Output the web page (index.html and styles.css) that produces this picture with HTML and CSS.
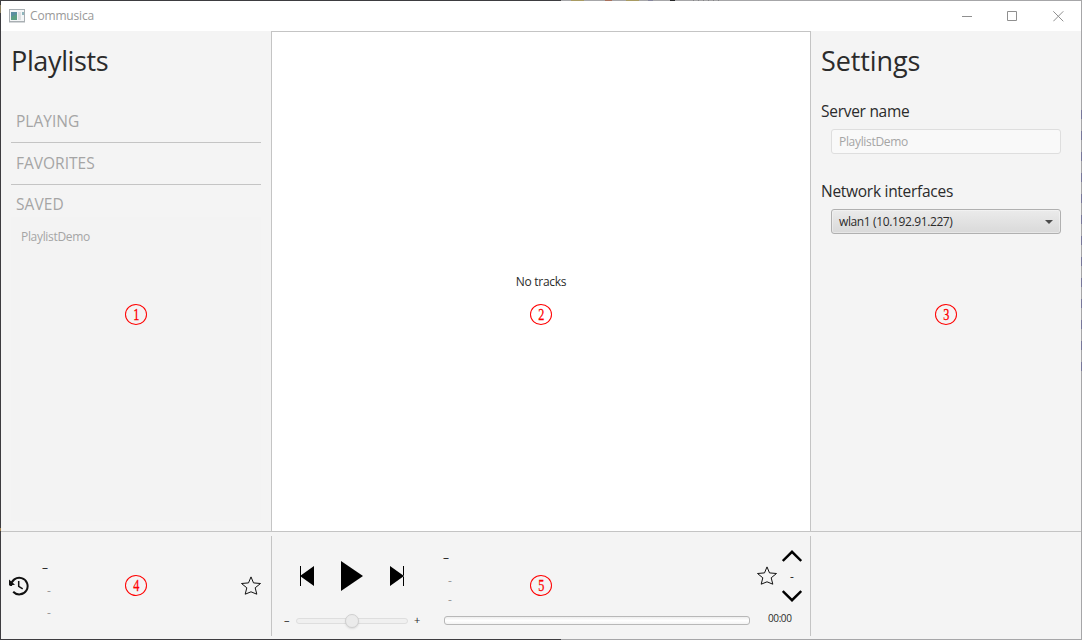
FILE: index.html
```html
<!DOCTYPE html>
<html lang="en">
<head>
<meta charset="utf-8">
<title>Commusica</title>
<link rel="stylesheet" href="styles.css">
</head>
<body>
<div class="window">
  <header class="titlebar">
    <svg class="app-icon" width="16" height="14" viewBox="0 0 16 14">
      <rect x=".5" y=".5" width="15" height="12" fill="#f4f6f7" stroke="#a9afb3"/>
      <rect x="2" y="3" width="6" height="8" fill="#5b8fa0"/>
      <path d="M2 11V8l6-3v6z" fill="#5c9f83"/>
      <rect x="9" y="3" width="3" height="8" fill="#dde0e2"/>
      <rect x="13" y="3" width="2" height="3" fill="#8fb6bd"/>
      <path d="M0 13.500h16" stroke="#d5d8da"/>
    </svg>
    <span class="app-name">Commusica</span>
    <div class="window-buttons">
      <svg class="minimize" width="10" height="11" viewBox="0 0 10 11"><path d="M0 5.500h10"/></svg>
      <svg width="11" height="11" viewBox="0 0 11 11"><path d="M.5.5h9v9h-9z"/></svg>
      <svg width="11" height="11" viewBox="0 0 11 11"><path d="M.3.300l10 10M10.300.300l-10 10"/></svg>
    </div>
  </header>

  <div class="columns">
    <aside class="playlists">
      <h1 class="heading"><span class="t-playlists">Playlists</span></h1>
      <div class="section playing">PLAYING</div>
      <div class="section favorites">FAVORITES</div>
      <div class="section saved">SAVED</div>
      <div class="saved-list"><div class="saved-item">PlaylistDemo</div></div>
    </aside>
    <main class="tracks">No tracks</main>
    <aside class="settings">
      <h1 class="heading"><span class="t-settings">Settings</span></h1>
      <div class="label server-label">Server name</div>
      <div class="field">PlaylistDemo</div>
      <div class="label network-label">Network interfaces</div>
      <div class="combo"><span>wlan1 (10.192.91.227)</span><i class="arrow"></i></div>
    </aside>
  </div>

  <footer class="bottom">
    <section class="history">
      <svg class="history-icon" width="21" height="20" viewBox="0 0 21 20">
        <path d="M2 10a8.300 8.300 0 1 1 2.200 5.700" fill="none" stroke="#111" stroke-width="2"/>
        <path d="M0 3.500l6 5.200-6 .8z" fill="#111"/>
        <path d="M9.700 5v5.400l4 2.500" fill="none" stroke="#111" stroke-width="1.500"/>
      </svg>
      <div class="meta">
        <span class="dash title">–</span>
        <span class="dash sub">-</span>
        <span class="dash sub last">-</span>
      </div>
      <svg class="star" width="20" height="19" viewBox="0 0 20 19"><path d="M10 .9l2.500 6 7 .6-5.300 4.300 1.600 6.400L10 15.800l-5.800 2.400 1.600-6.400L.5 7.500l7-.6z"/></svg>
    </section>

    <section class="player">
      <div class="controls">
        <div class="transport">
          <svg width="14" height="20" viewBox="0 0 14 20"><path d="M0 0h1v20H0zM14 0v20L0 10z"/></svg>
          <svg width="22" height="30" viewBox="0 0 22 30"><path d="M0 0l22 15L0 30z"/></svg>
          <svg width="14" height="20" viewBox="0 0 14 20"><path d="M13 0h1v20h-1zM0 0v20l14-10z"/></svg>
        </div>
        <div class="volume">
          <span class="sign">–</span>
          <div class="slider"><i class="thumb"></i></div>
          <span class="sign">+</span>
        </div>
      </div>
      <div class="info">
        <div class="meta">
          <span class="dash title">–</span>
          <span class="dash sub">-</span>
          <span class="dash sub last">-</span>
        </div>
        <div class="progress"></div>
      </div>
      <div class="side">
        <div class="rating">
          <svg class="star" width="20" height="19" viewBox="0 0 20 19"><path d="M10 .9l2.500 6 7 .6-5.300 4.300 1.600 6.400L10 15.800l-5.800 2.400 1.600-6.400L.5 7.500l7-.6z"/></svg>
          <div class="votes">
            <svg class="chevron" width="20" height="12" viewBox="0 0 20 12"><path d="M.8 11L10 1.800l9.200 9.200"/></svg>
            <span class="vote-count">-</span>
            <svg class="chevron" width="20" height="12" viewBox="0 0 20 12"><path d="M.8 1L10 10.200 19.200 1"/></svg>
          </div>
        </div>
        <div class="time">00:00</div>
      </div>
    </section>
    <section class="spare"></section>
  </footer>

  <span class="marker m1"><b>1</b></span>
  <span class="marker m2"><b>2</b></span>
  <span class="marker m3"><b>3</b></span>
  <span class="marker m4"><b>4</b></span>
  <span class="marker m5"><b>5</b></span>
</div>
</body>
</html>
```
FILE: styles.css
```css
* { box-sizing: border-box; }
body { margin: 0; background: #fff; }
svg { display: block; flex: none; }

/* The 1px frame shows slivers of the desktop behind the window. */
.window {
  position: relative;
  display: flex;
  flex-direction: column;
  width: 1082px;
  height: 640px;
  padding: 1px;
  overflow: hidden;
  background:
    linear-gradient(#a89b62, #a89b62) 571px 0 / 13px 1px no-repeat,
    linear-gradient(#a8705c, #a8705c) 605px 0 / 7px 1px no-repeat,
    linear-gradient(#a89b62, #a89b62) 626px 0 / 13px 1px no-repeat,
    linear-gradient(#85859c, #85859c) 648px 0 / 5px 1px no-repeat,
    linear-gradient(#252527, #252527) 670px 0 / 5px 1px no-repeat,
    repeating-linear-gradient(90deg, #858587 0 1px, #a6a6a8 1px 5px) 693px 0 / 28px 1px no-repeat,
    repeating-linear-gradient(#77779a 0 9px, #a6a6a8 9px 21px) 1081px 110px / 1px 262px no-repeat,
    linear-gradient(#8b7f60, #8b7f60) 0 5px / 1px 8px no-repeat,
    linear-gradient(#a08050, #a08050) 0 528px / 1px 3px no-repeat,
    linear-gradient(90deg, #3d3c40 561px, #a6a6a8 561px);
  color: #2b2b2b;
  font: 12px/16px "Open Sans", "Noto Sans", sans-serif;
  white-space: nowrap;
}

.titlebar {
  display: flex;
  align-items: center;
  height: 30px;
  padding: 0 18px 0 8px;
  background: #fff;
  color: #999;
}
.app-icon { margin-right: 5px; }
.app-name { letter-spacing: -.17px; }
.window-buttons { display: flex; gap: 35px; margin-left: auto; margin-right: -1px; }
.window-buttons path { fill: none; stroke: #8f8f8f; }

.columns {
  display: grid;
  grid-template-columns: 270px 540px 270px;
  height: 500px;
  background: #f4f4f4;
}

.heading { margin: 0; height: 60px; font-size: 27px; font-weight: 400; line-height: 60px; }
.t-playlists { letter-spacing: -.36px; }
.t-settings { letter-spacing: -.1px; }

.playlists { display: flex; flex-direction: column; padding: 0 10px 10px; }
.section { padding-left: 5px; color: #a5a5a5; font-size: 15.500px; letter-spacing: 0; }
.playing { margin-top: 9px; border-bottom: 1px solid #c4c4c4; line-height: 42px; }
.favorites { border-bottom: 1px solid #c4c4c4; line-height: 41px; }
.saved { padding-top: 6px; line-height: 26px; letter-spacing: .1px; }
.saved-list { flex: 1; padding: 7px 10px; background: #f3f3f3; color: #a5a5a5; }
.saved-item { font-size: 12px; line-height: 26px; letter-spacing: -.32px; }

.tracks {
  display: flex;
  align-items: center;
  justify-content: center;
  border: 1px solid #c4c4c4;
  border-bottom: 0;
  background: #fff;
  letter-spacing: -.3px;
}

.settings { padding: 0 20px 0 10px; }
.label { font-size: 15.500px; line-height: 24px; letter-spacing: -.28px; }
.server-label { margin-top: 8px; }
.network-label { margin-top: 25px; }
.field, .combo { height: 25px; margin-left: 10px; padding: 0 7px; border-radius: 3px; line-height: 24px; }
.field { margin-top: 6px; border: 1px solid #dedede; background: #f9f9f9; color: #a5a5a5; letter-spacing: -.32px; }
.combo {
  display: flex;
  align-items: center;
  justify-content: space-between;
  margin-top: 6px;
  border: 1px solid #b0b0b0;
  background: linear-gradient(#ebebeb, #d9d9d9);
  box-shadow: inset 0 0 0 1px rgba(255, 255, 255, .35);
  letter-spacing: -.38px;
}
.arrow { border: 4px solid transparent; border-top-color: #4c4c4c; border-bottom: 0; }

.bottom {
  display: grid;
  grid-template-columns: 270px 539px 271px;
  height: 108px;
  padding: 4px 0 3px;
  border-top: 1px solid #c4c4c4;
  background: #f4f4f4;
}
.dash { display: block; font-size: 12px; line-height: 16px; }
.sub { padding-left: 5px; color: #999; }

.history { display: flex; padding-left: 8px; }
.history-icon { margin-top: 40px; }
.history .meta { margin: 24px 0 0 12px; }
.history .sub { margin-top: 7px; }
.history .last { margin-top: 6px; }
.history .star { margin: 40px 10px 0 auto; }
.star path { fill: none; stroke: #111; }

.player { display: flex; padding-left: 12px; border: solid #c4c4c4; border-width: 0 0 0 1px; }
.controls { width: 137px; }
.transport { display: flex; align-items: center; height: 80px; gap: 27px; padding-left: 16px; }
.volume { display: flex; align-items: center; height: 9px; }
.sign { flex: none; width: 12px; padding-bottom: 3px; font-size: 11px; line-height: 9px; }
.slider {
  position: relative;
  flex: none;
  width: 112px;
  height: 6px;
  margin-right: 6px;
  border: 1px solid #dedede;
  border-radius: 3px;
  background: #f0f0f0;
}
.thumb {
  position: absolute;
  left: 48px;
  top: -5px;
  width: 14px;
  height: 14px;
  border: 1px solid #d0d0d0;
  border-radius: 50%;
  background: #ebebeb;
  box-shadow: 0 1px 2px rgba(0, 0, 0, .1);
}
.info { width: 306px; margin-left: 23px; }
.info .meta { height: 80px; padding-top: 14px; margin-left: -1px; }
.info .sub { margin-top: 7px; }
.info .last { margin-top: 3px; }
.progress { height: 9px; border: 1px solid #b8b8b8; border-radius: 3px; background: linear-gradient(#eee, #fff 50%, #f3f3f3); }

.side { margin-left: 7px; }
.rating { display: flex; height: 72px; gap: 5px; }
.rating .star { margin-top: 30px; }
.votes { display: flex; flex-direction: column; align-items: center; justify-content: space-between; padding: 14px 0 6px; }
.chevron path { fill: none; stroke: #000; stroke-width: 2.400; }
.vote-count { padding-top: 1px; line-height: 16px; }
.time { padding-left: 11px; font-size: 10px; line-height: 21px; letter-spacing: -.4px; }
.spare { border-left: 1px solid #c4c4c4; }

.marker {
  position: absolute;
  width: 22px;
  height: 21px;
  border: 1px solid #f00;
  border-radius: 50%;
  color: #f00;
  font: 17px/20px "Liberation Serif", serif;
  text-align: center;
}
.marker b { display: inline-block; font-weight: 400; transform: scaleX(.72); -webkit-text-stroke: .3px #f00; }
.m1 { left: 125px; top: 304px; }
.m2 { left: 530px; top: 304px; }
.m3 { left: 935px; top: 304px; }
.m4 { left: 125px; top: 575px; }
.m5 { left: 530px; top: 575px; }
```
